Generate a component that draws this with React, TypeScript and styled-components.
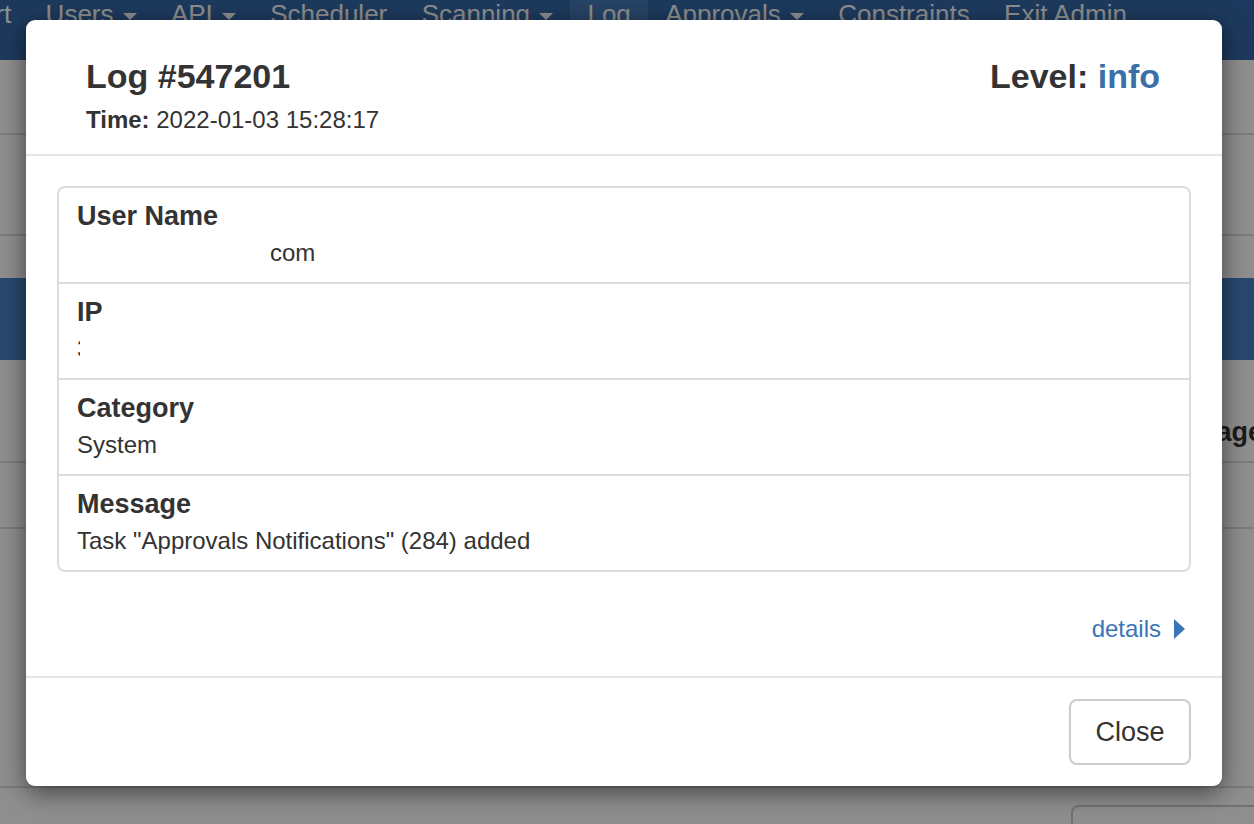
import React from "react";
import styled, { createGlobalStyle } from "styled-components";

const GlobalStyle = createGlobalStyle`
  html, body {
    margin: 0;
    padding: 0;
    overflow: hidden;
    background: #fff;
  }
  body {
    font-family: "Liberation Sans", Arial, Helvetica, sans-serif;
    color: #333;
  }
  * { box-sizing: border-box; }
`;

const Page = styled.div`
  position: relative;
  width: 1254px;
  height: 824px;
  overflow: hidden;
  background: #fff;
`;

const Navbar = styled.nav`
  height: 60px;
  background: #3468a8;
  overflow: hidden;
`;

const NavList = styled.ul`
  display: flex;
  list-style: none;
  margin: -10px 0 0 -84px;
  padding: 0;
`;

const NavItem = styled.li<{ $active?: boolean }>`
  display: flex;
  align-items: center;
  padding: 0 17.2px;
  height: 48px;
  font-size: 26px;
  line-height: 36px;
  color: #fff;
  white-space: nowrap;
  background: ${(p) => (p.$active ? "#4479b6" : "transparent")};
`;

const Caret = styled.span`
  display: inline-block;
  margin-left: 9px;
  margin-top: 4px;
  width: 0;
  height: 0;
  border-left: 7px solid transparent;
  border-right: 7px solid transparent;
  border-top: 7px solid #fff;
`;

const Strip = styled.div<{ $h: number; $plain?: boolean }>`
  height: ${(p) => p.$h}px;
  background: #fff;
  border-bottom: ${(p) => (p.$plain ? "none" : "2px solid #ddd")};
`;

const BandRow = styled.div`
  height: 82px;
  background: #4883c6;
`;

const HeadRow = styled.div`
  display: grid;
  grid-template-columns: 1149px auto;
  align-items: end;
  height: 103px;
  padding-bottom: 14px;
  border-bottom: 2px solid #ddd;
  font-size: 27px;
  line-height: 30px;
  font-weight: bold;
  color: #333;
  white-space: nowrap;
`;

const BottomArea = styled.div`
  display: flex;
  padding: 17px 0 0 1071px;
`;

const GhostBox = styled.div`
  flex: 0 0 220px;
  height: 60px;
  border: 2px solid #ccc;
  border-radius: 8px;
  background: #fff;
`;

const Backdrop = styled.div`
  position: absolute;
  inset: 0;
  background: rgba(0, 0, 0, 0.44);
  padding: 20px 0 0 26px;
`;

const Modal = styled.div`
  width: 1196px;
  background: #fff;
  border-radius: 9px;
  box-shadow: 0 6px 26px rgba(0, 0, 0, 0.55);
`;

const Header = styled.div`
  display: flex;
  justify-content: space-between;
  align-items: flex-start;
  padding: 36px 62px 16px 60px;
  border-bottom: 2px solid #e5e5e5;
`;

const HeaderMain = styled.div`
  display: flex;
  flex-direction: column;
`;

const Heading = styled.h4`
  margin: 0;
  font-size: 34px;
  line-height: 40px;
  font-weight: bold;
  color: #333;
`;

const LevelValue = styled.span`
  color: #3a6fa8;
`;

const TimeLine = styled.div`
  margin-top: 6px;
  font-size: 24px;
  line-height: 36px;
  color: #333;
`;

const Strong = styled.b`
  font-weight: bold;
`;

const Body = styled.div`
  padding: 30px 31px 29px;
`;

const Card = styled.div`
  border: 2px solid #ddd;
  border-radius: 8px;
`;

const Row = styled.div`
  padding: 10px 18px 10px;
  & + & {
    border-top: 2px solid #ddd;
  }
`;

const Label = styled.div`
  font-size: 27px;
  line-height: 36px;
  font-weight: bold;
  color: #333;
`;

const Value = styled.div`
  font-size: 24px;
  line-height: 38px;
  color: #333;
  white-space: nowrap;
`;

const Redacted = styled.span<{ $w: number }>`
  display: inline-block;
  width: ${(p) => p.$w}px;
  overflow: hidden;
  vertical-align: bottom;
  color: #333;
`;

const DetailsRow = styled.div`
  display: flex;
  justify-content: flex-end;
  align-items: center;
  margin-top: 39px;
  padding-right: 6px;
  height: 36px;
`;

const DetailsLink = styled.a`
  display: flex;
  align-items: center;
  gap: 13px;
  font-size: 24px;
  line-height: 36px;
  color: #3a76b5;
  text-decoration: none;
  cursor: pointer;
`;

const Footer = styled.div`
  display: flex;
  justify-content: flex-end;
  padding: 21px 31px 21px;
  border-top: 2px solid #e5e5e5;
`;

const CloseButton = styled.button`
  width: 122px;
  height: 66px;
  border: 2px solid #ccc;
  border-radius: 8px;
  background: #fff;
  font-family: "Liberation Sans", Arial, sans-serif;
  font-size: 27px;
  color: #333;
  cursor: pointer;
`;

const navItems: { label: string; caret?: boolean; active?: boolean }[] = [
  { label: "Report" },
  { label: "Users", caret: true },
  { label: "API", caret: true },
  { label: "Scheduler" },
  { label: "Scanning", caret: true },
  { label: "Log", active: true },
  { label: "Approvals", caret: true },
  { label: "Constraints" },
  { label: "Exit Admin" },
];

export default function App() {
  return (
    <>
      <GlobalStyle />
      <Page>
        <Navbar>
          <NavList>
            {navItems.map((n) => (
              <NavItem key={n.label} $active={n.active}>
                {n.label}
                {n.caret && <Caret />}
              </NavItem>
            ))}
          </NavList>
        </Navbar>
        <Strip $h={75} />
        <Strip $h={101} />
        <Strip $h={42} $plain />
        <BandRow />
        <HeadRow>
          <span />
          <span>Message</span>
        </HeadRow>
        <Strip $h={66} />
        <Strip $h={259} />
        <BottomArea>
          <GhostBox />
        </BottomArea>

        <Backdrop>
          <Modal>
            <Header>
              <HeaderMain>
                <Heading>Log #547201</Heading>
                <TimeLine>
                  <Strong>Time:</Strong> 2022-01-03 15:28:17
                </TimeLine>
              </HeaderMain>
              <Heading>
                Level: <LevelValue>info</LevelValue>
              </Heading>
            </Header>
            <Body>
              <Card>
                <Row>
                  <Label>User Name</Label>
                  <Value>
                    <Redacted $w={193} />
                    com
                  </Value>
                </Row>
                <Row>
                  <Label>IP</Label>
                  <Value>
                    <Redacted $w={3}>3</Redacted>
                  </Value>
                </Row>
                <Row>
                  <Label>Category</Label>
                  <Value>System</Value>
                </Row>
                <Row>
                  <Label>Message</Label>
                  <Value>Task "Approvals Notifications" (284) added</Value>
                </Row>
              </Card>
              <DetailsRow>
                <DetailsLink>
                  details
                  <svg width="11" height="20" viewBox="0 0 11 20">
                    <path d="M0 0 L11 10 L0 20 Z" fill="#3a76b5" />
                  </svg>
                </DetailsLink>
              </DetailsRow>
            </Body>
            <Footer>
              <CloseButton>Close</CloseButton>
            </Footer>
          </Modal>
        </Backdrop>
      </Page>
    </>
  );
}
